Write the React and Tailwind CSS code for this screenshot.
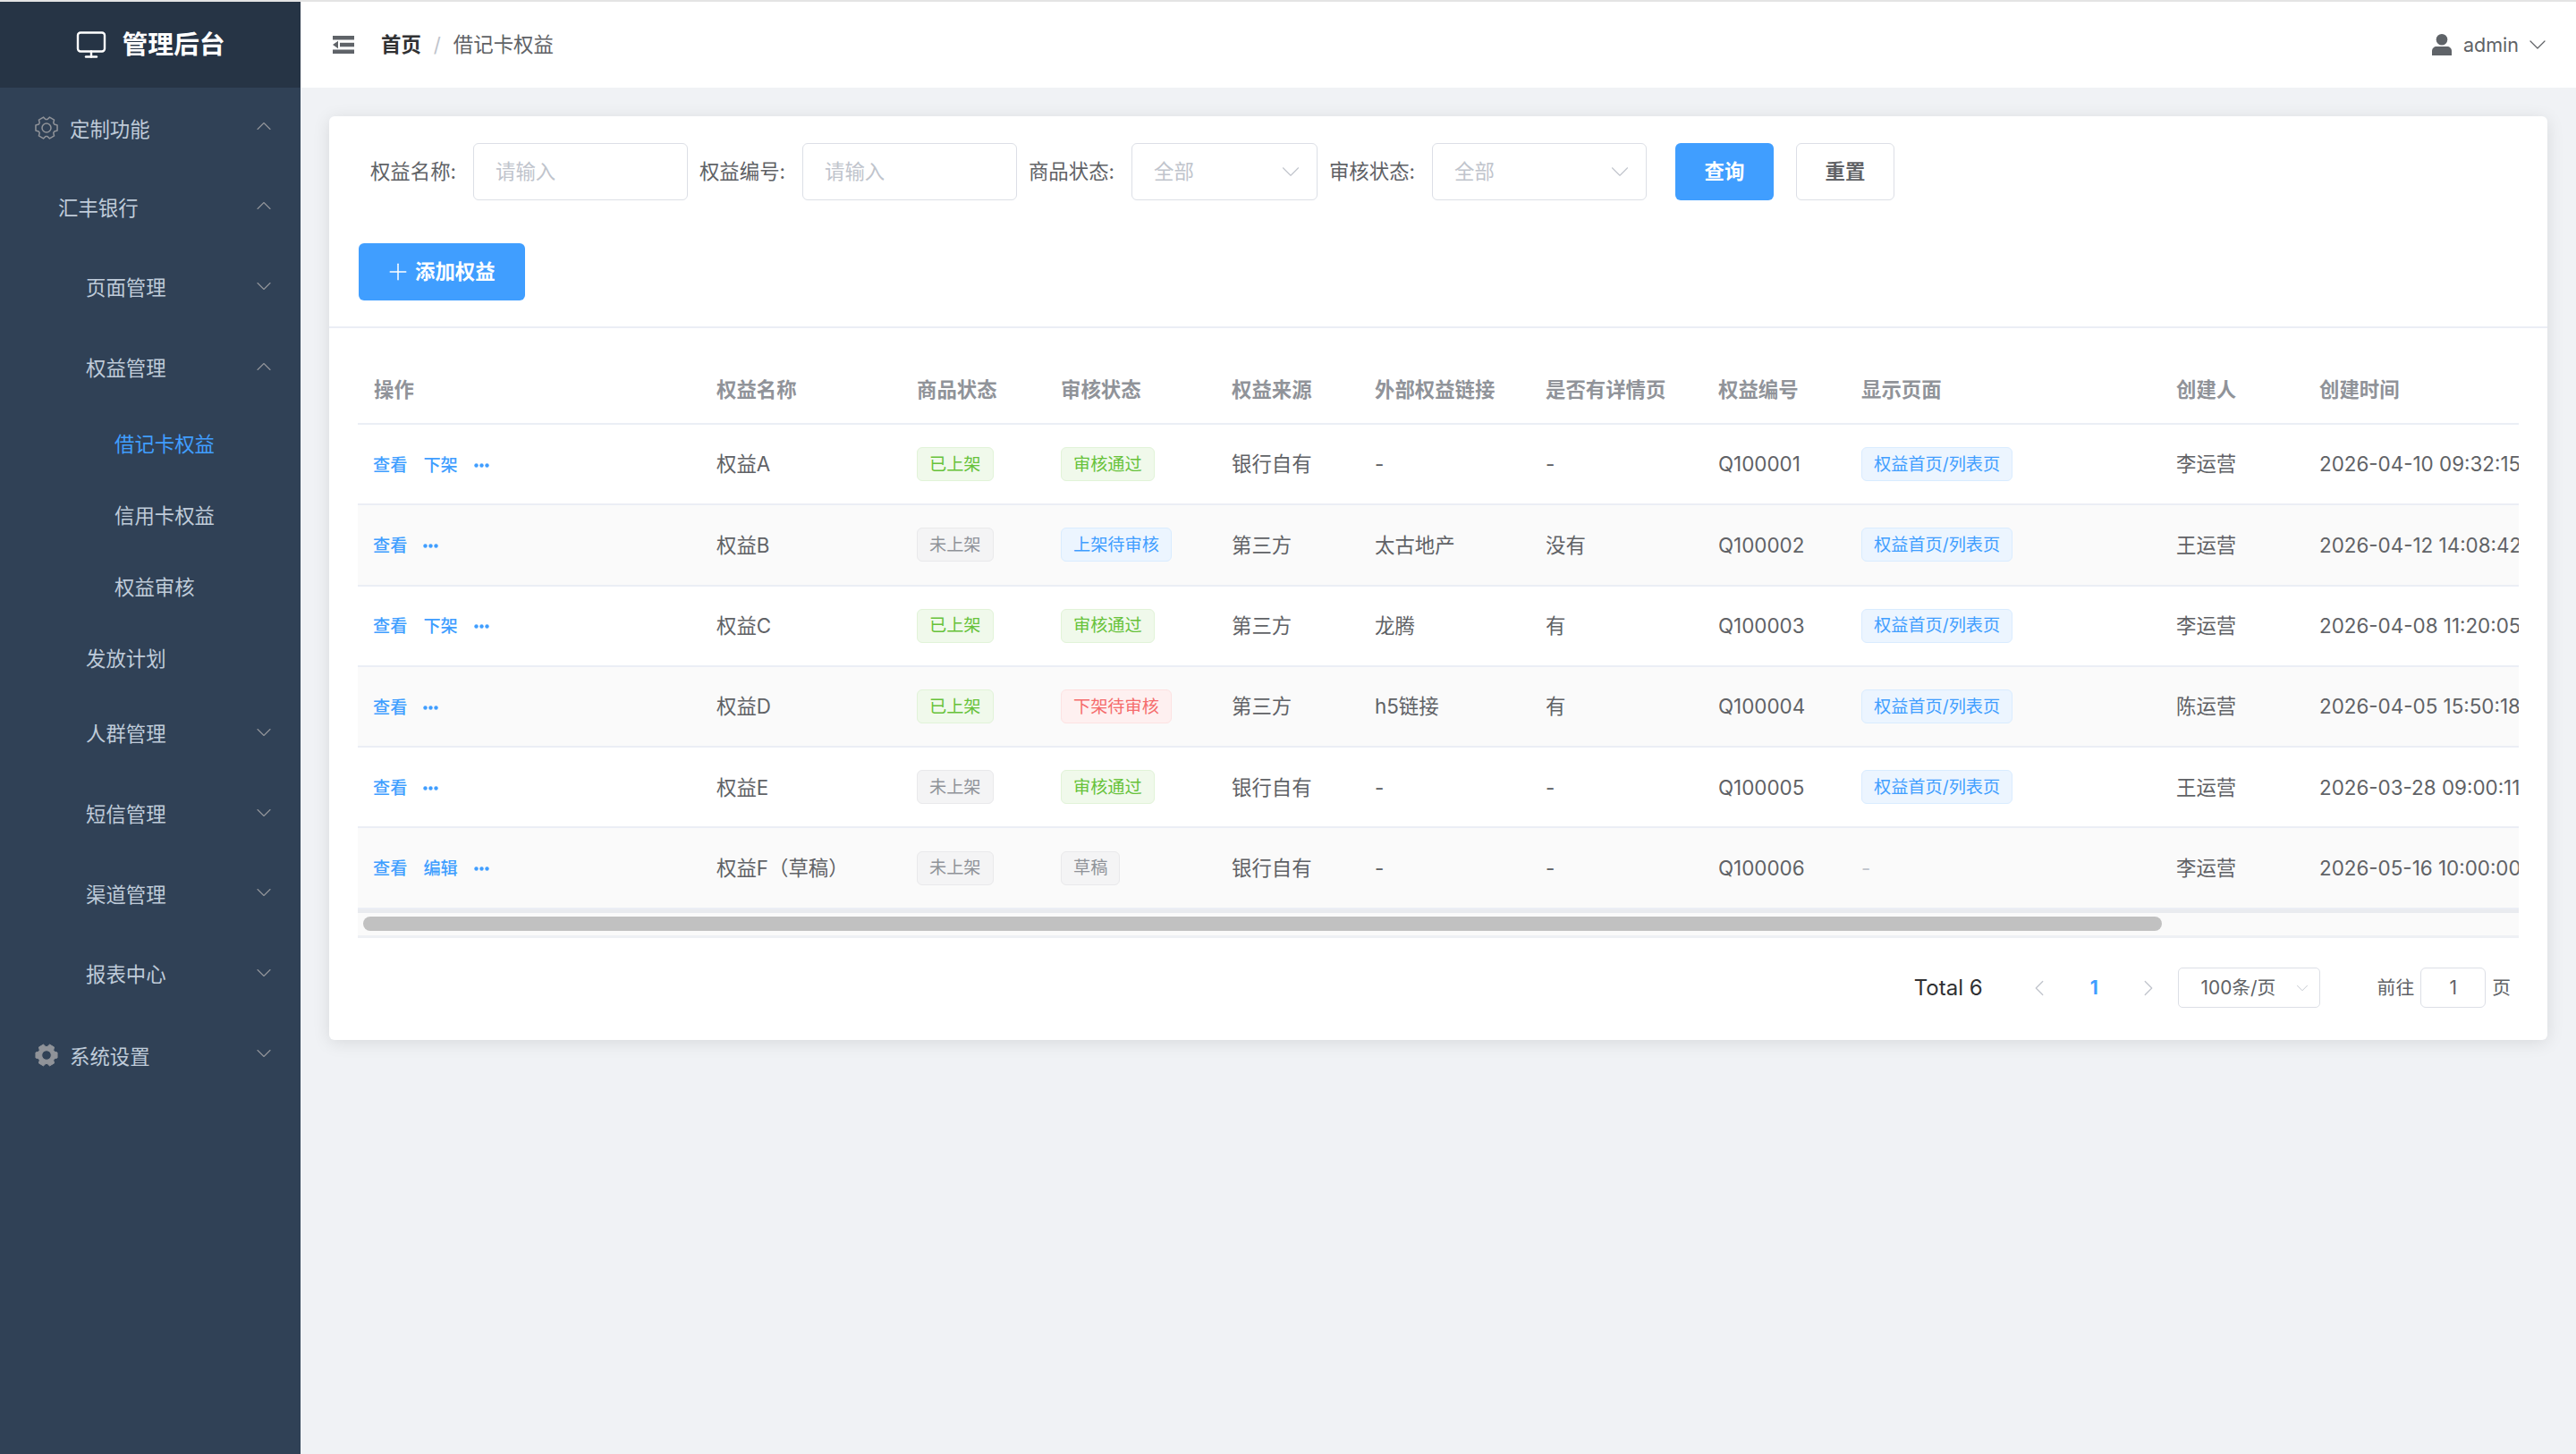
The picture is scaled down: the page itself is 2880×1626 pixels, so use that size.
import React from 'react';
import { ChevronDown, ChevronUp, ChevronLeft, ChevronRight, Monitor, Plus } from 'lucide-react';

const menu = [
  { label: '定制功能', level: 0, open: true, icon: 'outline' },
  { label: '汇丰银行', level: 1, open: true },
  { label: '页面管理', level: 2, open: false },
  { label: '权益管理', level: 2, open: true },
  { label: '借记卡权益', level: 3, active: true },
  { label: '信用卡权益', level: 3 },
  { label: '权益审核', level: 3 },
  { label: '发放计划', level: 2, leaf: true },
  { label: '人群管理', level: 2, open: false },
  { label: '短信管理', level: 2, open: false },
  { label: '渠道管理', level: 2, open: false },
  { label: '报表中心', level: 2, open: false },
  { label: '系统设置', level: 0, open: false, icon: 'solid' },
];

const levelPadding = {
  0: 'pl-[38px]',
  1: 'pl-[65px]',
  2: 'pl-[96px]',
  3: 'pl-[128px]',
};

const columns = [
  { title: '操作', width: 384 },
  { title: '权益名称', width: 224 },
  { title: '商品状态', width: 161 },
  { title: '审核状态', width: 191 },
  { title: '权益来源', width: 160 },
  { title: '外部权益链接', width: 191 },
  { title: '是否有详情页', width: 193 },
  { title: '权益编号', width: 160 },
  { title: '显示页面', width: 352 },
  { title: '创建人', width: 160 },
  { title: '创建时间', width: 320 },
];

const tagStyles = {
  success: 'bg-[#f0f9eb] border-[#e1f3d8] text-[#67c23a]',
  info: 'bg-[#f4f4f5] border-[#e9e9eb] text-[#909399]',
  primary: 'bg-[#ecf5ff] border-[#d9ecff] text-[#409eff]',
  danger: 'bg-[#fef0f0] border-[#fde2e2] text-[#f56c6c]',
};

const rows = [
  { actions: ['查看', '下架'], name: '权益A', goods: ['已上架', 'success'], audit: ['审核通过', 'success'], source: '银行自有', link: '-', detail: '-', code: 'Q100001', page: true, creator: '李运营', time: '2026-04-10 09:32:15' },
  { actions: ['查看'], name: '权益B', goods: ['未上架', 'info'], audit: ['上架待审核', 'primary'], source: '第三方', link: '太古地产', detail: '没有', code: 'Q100002', page: true, creator: '王运营', time: '2026-04-12 14:08:42' },
  { actions: ['查看', '下架'], name: '权益C', goods: ['已上架', 'success'], audit: ['审核通过', 'success'], source: '第三方', link: '龙腾', detail: '有', code: 'Q100003', page: true, creator: '李运营', time: '2026-04-08 11:20:05' },
  { actions: ['查看'], name: '权益D', goods: ['已上架', 'success'], audit: ['下架待审核', 'danger'], source: '第三方', link: 'h5链接', detail: '有', code: 'Q100004', page: true, creator: '陈运营', time: '2026-04-05 15:50:18' },
  { actions: ['查看'], name: '权益E', goods: ['未上架', 'info'], audit: ['审核通过', 'success'], source: '银行自有', link: '-', detail: '-', code: 'Q100005', page: true, creator: '王运营', time: '2026-03-28 09:00:11' },
  { actions: ['查看', '编辑'], name: '权益F（草稿）', goods: ['未上架', 'info'], audit: ['草稿', 'info'], source: '银行自有', link: '-', detail: '-', code: 'Q100006', page: false, creator: '李运营', time: '2026-05-16 10:00:00' },
];

// six tooth gear, the sidebar uses it outlined and filled
const gearPath = () => {
  const pts = [];
  for (let i = 0; i < 6; i++) {
    const a = (i * Math.PI) / 3;
    [[-0.42, 9.6], [-0.24, 12.4], [0.24, 12.4], [0.42, 9.6]].forEach(([d, r]) => {
      pts.push(`${(14 + r * Math.cos(a + d)).toFixed(2)} ${(14 + r * Math.sin(a + d)).toFixed(2)}`);
    });
  }
  return `M${pts.join('L')}Z`;
};

const GearIcon = ({ solid }) => (
  <svg width="28" height="28" viewBox="0 0 28 28" className="mr-[12px] shrink-0">
    {solid ? (
      <path
        d={`${gearPath()}M14 8.700a5.300 5.300 0 1 0 0 10.600a5.300 5.300 0 1 0 0-10.600Z`}
        fill="#909399"
        stroke="#909399"
        strokeLinejoin="round"
        fillRule="evenodd"
      />
    ) : (
      <>
        <path d={gearPath()} fill="none" stroke="#909399" strokeWidth="1.5" strokeLinejoin="round" />
        <circle cx="14" cy="14" r="5" fill="none" stroke="#909399" strokeWidth="1.5" />
      </>
    )}
  </svg>
);

const Tag = ({ type, children }) => (
  <span className={`inline-flex items-center h-[38px] px-[13px] border rounded-[6px] text-[19.2px] whitespace-nowrap ${tagStyles[type]}`}>
    {children}
  </span>
);

const Dots = () => (
  <svg width="17" height="5" viewBox="0 0 17 5" fill="#409eff">
    <circle cx="2.500" cy="2.500" r="2.200" />
    <circle cx="8.500" cy="2.500" r="2.200" />
    <circle cx="14.500" cy="2.500" r="2.200" />
  </svg>
);

const HamburgerIcon = () => (
  <svg width="24" height="20" viewBox="0 0 24 20" fill="#5f6368">
    <rect x="0" y="0" width="24" height="4.500" />
    <rect x="8" y="7.800" width="16" height="4.500" />
    <rect x="0" y="15.500" width="24" height="4.500" />
    <path d="M0 10l6-4.200v8.400z" />
  </svg>
);

const UserIcon = () => (
  <svg width="22" height="24" viewBox="0 0 22 24" fill="#5f6368">
    <ellipse cx="11" cy="6.300" rx="6.300" ry="6.300" />
    <path d="M0 24v-5c0-3 2.500-5 5-5h12c2.500 0 5 2 5 5v5z" />
  </svg>
);

const SideItem = ({ item }) => {
  const heightClass = item.level === 3 || item.leaf ? 'h-[80px]' : 'h-[89.6px]';
  const textClass = item.active ? 'text-[#409eff]' : 'text-[#bfcbd9]';
  return (
    <div className={`flex items-center ${heightClass} ${levelPadding[item.level]} pr-[27px] text-[22.4px] ${textClass}`}>
      {item.icon === 'outline' && <GearIcon />}
      {item.icon === 'solid' && <GearIcon solid />}
      <span className={`flex-1 whitespace-nowrap ${item.level === 0 ? 'translate-y-[2px]' : ''}`}>{item.label}</span>
      {item.open === true && <ChevronUp size={28} strokeWidth={1} className="text-[#909399] -translate-y-[2px]" />}
      {item.open === false && <ChevronDown size={28} strokeWidth={1} className="text-[#909399] -translate-y-[2px]" />}
    </div>
  );
};

const Sidebar = () => (
  <aside className="w-[336px] shrink-0 bg-[#304156]">
    <div className="h-[96px] bg-[#263445] flex items-center justify-center gap-[16px] text-white">
      <Monitor size={36} strokeWidth={1.6} />
      <span className="text-[28.8px] font-bold">管理后台</span>
    </div>
    {menu.map((item) => <SideItem key={item.label} item={item} />)}
  </aside>
);

const Topbar = () => (
  <header className="h-[96px] bg-white flex items-center justify-between pl-[36px] pr-[27px]">
    <div className="flex items-center">
      <HamburgerIcon />
      <span className="ml-[30px] text-[22.4px] font-bold text-[#303133]">首页</span>
      <span className="mx-[14px] text-[22.4px] text-[#c0c4cc]">/</span>
      <span className="text-[22.4px] text-[#606266]">借记卡权益</span>
    </div>
    <div className="flex items-center text-[#606266]">
      <UserIcon />
      <span className="ml-[13px] text-[21.5px]">admin</span>
      <ChevronDown size={32} strokeWidth={0.9} className="ml-[5px] text-[#606266]" />
    </div>
  </header>
);

const FilterField = ({ label, value, width, select }) => (
  <div className="flex items-center">
    <label className="w-[128px] pr-[19px] text-right text-[22.4px] text-[#606266] whitespace-nowrap">{label}:</label>
    <div className={`flex items-center justify-between h-[64px] ${width} pl-[24px] pr-[12px] bg-white border border-[#dcdfe6] rounded-[6px] text-[22.4px] text-[#c0c4cc]`}>
      <span>{value}</span>
      {select && <ChevronDown size={34} strokeWidth={0.8} className="text-[#c0c4cc]" />}
    </div>
  </div>
);

const Filters = () => (
  <div className="flex items-center ml-[1px]">
    <FilterField label="权益名称" value="请输入" width="w-[240px]" />
    <FilterField label="权益编号" value="请输入" width="w-[240px]" />
    <FilterField label="商品状态" value="全部" width="w-[208px]" select />
    <FilterField label="审核状态" value="全部" width="w-[240px]" select />
    <button className="ml-[32px] w-[110px] h-[64px] rounded-[6px] bg-[#409eff] text-white text-[22.4px] font-bold">查询</button>
    <button className="ml-[25px] w-[110px] h-[64px] rounded-[6px] bg-white border border-[#dcdfe6] text-[#606266] text-[22.4px] font-bold">重置</button>
  </div>
);

const Table = () => (
  <div className="overflow-hidden">
    <table className="table-fixed border-collapse w-[2496px]">
      <colgroup>
        {columns.map((col) => <col key={col.title} style={{ width: col.width }} />)}
      </colgroup>
      <thead>
        <tr className="h-[78px] border-b-2 border-[#ebeef5]">
          {columns.map((col) => (
            <th key={col.title} className="pl-[17px] first:pl-[18px] pt-[3px] text-left text-[22.4px] font-bold text-[#909399] whitespace-nowrap">{col.title}</th>
          ))}
        </tr>
      </thead>
      <tbody>
        {rows.map((row, i) => (
          <tr key={row.code} className={`h-[90.3px] border-b-2 border-[#ebeef5] text-[22.4px] text-[#606266] ${i % 2 === 1 ? 'bg-[#fafafa]' : 'bg-white'}`}>
            <td className="pl-[17px] pt-[2px]">
              <div className="flex items-center gap-[18px] text-[19.2px] font-medium text-[#409eff]">
                {row.actions.map((a) => <span key={a}>{a}</span>)}
                <Dots />
              </div>
            </td>
            <td className="pl-[17px] whitespace-nowrap">{row.name}</td>
            <td className="pl-[17px]"><Tag type={row.goods[1]}>{row.goods[0]}</Tag></td>
            <td className="pl-[17px]"><Tag type={row.audit[1]}>{row.audit[0]}</Tag></td>
            <td className="pl-[17px]">{row.source}</td>
            <td className="pl-[17px]">{row.link}</td>
            <td className="pl-[17px]">{row.detail}</td>
            <td className="pl-[17px]">{row.code}</td>
            <td className="pl-[17px]">
              {row.page ? <Tag type="primary">权益首页/列表页</Tag> : <span className="text-[#c0c4cc]">-</span>}
            </td>
            <td className="pl-[17px]">{row.creator}</td>
            <td className="pl-[17px] whitespace-nowrap">{row.time}</td>
          </tr>
        ))}
      </tbody>
    </table>
  </div>
);

const Scrollbar = () => (
  <div className="h-[32px] bg-[#fafafa] border-t-[4px] border-b-[3px] border-t-[#e9ebef] border-b-[#eef0f4] flex items-center px-[6px]">
    <div className="h-[16px] w-[2011px] rounded-full bg-[#c1c1c1]" />
  </div>
);

const Pagination = () => (
  <div className="flex items-center justify-end h-[114px] pb-[2px] text-[#606266]">
    <span className="text-[24px] text-[#303133]">Total 6</span>
    <ChevronLeft size={30} strokeWidth={1} className="ml-[48px] text-[#c0c4cc]" />
    <span className="ml-[42px] mr-[41px] text-[20.8px] font-bold text-[#409eff]">1</span>
    <ChevronRight size={30} strokeWidth={1} className="text-[#c0c4cc]" />
    <div className="ml-[18px] flex items-center justify-between w-[159px] h-[45px] pl-[25px] pr-[8px] border border-[#dcdfe6] rounded-[5px] text-[20.8px]">
      <span>100条/页</span>
      <ChevronDown size={22} strokeWidth={1} className="text-[#c0c4cc]" />
    </div>
    <span className="ml-[64px] text-[20.8px]">前往</span>
    <div className="ml-[7px] flex items-center justify-center w-[73px] h-[45px] border border-[#dcdfe6] rounded-[6px] text-[20.8px]">1</div>
    <span className="ml-[7px] mr-[9px] text-[20.8px]">页</span>
  </div>
);

const App = () => (
  <div className="min-h-screen flex flex-col bg-[#f0f2f5] font-['Inter','Noto_Sans_CJK_SC',sans-serif]">
    <div className="h-[2px] bg-[#e4e4e4]" />
    <div className="flex flex-1">
      <Sidebar />
      <main className="flex-1 min-w-0">
        <Topbar />
        <div className="p-[32px]">
          <section className="bg-white rounded-[6px] shadow-[0_3px_19px_rgba(0,0,0,0.1)]">
            <div className="px-[32px] pt-[30px] pb-[29px] border-b-2 border-[#ebeef5]">
              <Filters />
              <button className="mt-[48px] ml-[1px] flex items-center w-[186px] h-[64px] pl-[29px] rounded-[6px] bg-[#409eff] text-white text-[22.4px] font-bold">
                <Plus size={30} strokeWidth={1.2} className="mr-[4px]" />
                添加权益
              </button>
            </div>
            <div className="px-[32px] pt-[29px]">
              <Table />
              <Scrollbar />
              <Pagination />
            </div>
          </section>
        </div>
      </main>
    </div>
  </div>
);

export default App;
